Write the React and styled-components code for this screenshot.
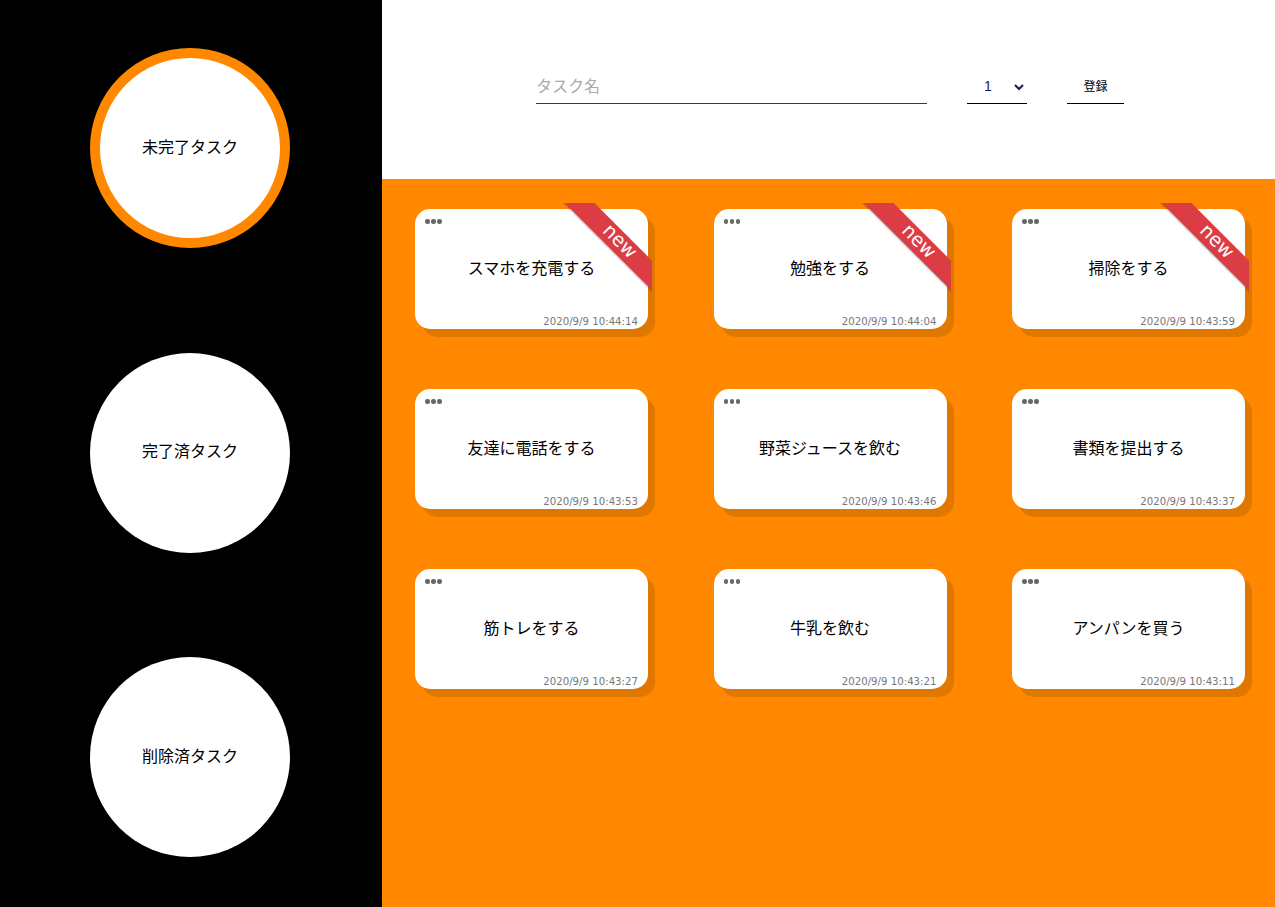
import React from 'react';
import styled, { createGlobalStyle } from 'styled-components';

const tasks = [
  { name: 'スマホを充電する', date: '2020/9/9 10:44:14', isNew: true },
  { name: '勉強をする', date: '2020/9/9 10:44:04', isNew: true },
  { name: '掃除をする', date: '2020/9/9 10:43:59', isNew: true },
  { name: '友達に電話をする', date: '2020/9/9 10:43:53' },
  { name: '野菜ジュースを飲む', date: '2020/9/9 10:43:46' },
  { name: '書類を提出する', date: '2020/9/9 10:43:37' },
  { name: '筋トレをする', date: '2020/9/9 10:43:27' },
  { name: '牛乳を飲む', date: '2020/9/9 10:43:21' },
  { name: 'アンパンを買う', date: '2020/9/9 10:43:11' },
];

const menus = ['未完了タスク', '完了済タスク', '削除済タスク'];

const App = () => (
  <>
    <GlobalStyle />
    <StyledLayout>
      <StyledSidebar>
        {menus.map((label, i) => (
          <StyledCircle key={label} active={i === 0}>
            {label}
          </StyledCircle>
        ))}
      </StyledSidebar>
      <StyledMain>
        <StyledHeader>
          <StyledInput placeholder="タスク名" />
          <StyledSelect defaultValue="1">
            <option value="1">1</option>
            <option value="2">2</option>
            <option value="3">3</option>
          </StyledSelect>
          <StyledButton>登録</StyledButton>
        </StyledHeader>
        <StyledGrid>
          {tasks.map(task => (
            <StyledCard key={task.name}>
              <StyledDots>
                <span />
                <span />
                <span />
              </StyledDots>
              {task.isNew && (
                <StyledRibbonWrap>
                  <StyledRibbon>new</StyledRibbon>
                </StyledRibbonWrap>
              )}
              <StyledTitle>{task.name}</StyledTitle>
              <StyledDate>{task.date}</StyledDate>
            </StyledCard>
          ))}
        </StyledGrid>
      </StyledMain>
    </StyledLayout>
  </>
);

const GlobalStyle = createGlobalStyle`
  body {
    margin: 0;
    font-family: 'Noto Sans CJK JP', 'Noto Sans', sans-serif;
  }
`;

const StyledLayout = styled.div`
  display: flex;
  width: 1275px;
  height: 907px;
  overflow: hidden;
`;

const StyledSidebar = styled.nav`
  width: 382px;
  flex-shrink: 0;
  background: #000;
  display: flex;
  flex-direction: column;
  align-items: flex-start;
  padding: 48px 0 0 90px;
  gap: 104.5px;
  box-sizing: border-box;
`;

const StyledCircle = styled.div`
  width: 200px;
  height: 200px;
  border-radius: 50%;
  background: #fff;
  box-sizing: border-box;
  border: ${({ active }) => (active ? '10px solid #ff8800' : 'none')};
  display: flex;
  align-items: center;
  justify-content: center;
  padding-bottom: 5px;
  font-size: 16px;
  color: #000;
  cursor: pointer;
`;

const StyledMain = styled.main`
  flex: 1;
  display: flex;
  flex-direction: column;
  background: #ff8800;
`;

const StyledHeader = styled.div`
  height: 179px;
  background: #fff;
  display: flex;
  align-items: flex-start;
  padding: 71px 0 0 154px;
  box-sizing: border-box;
`;

const StyledInput = styled.input`
  width: 391px;
  height: 33px;
  border: none;
  border-bottom: 1px solid #2c3e50;
  outline: none;
  font-family: inherit;
  font-size: 16px;
  padding: 0 0 4px;
  margin-right: 40px;
  box-sizing: border-box;
  &::placeholder {
    color: #aaa;
  }
`;

const StyledSelect = styled.select`
  width: 60px;
  height: 33px;
  border: none;
  border-bottom: 1px solid #000;
  background: transparent;
  font-family: 'Liberation Sans', sans-serif;
  font-size: 14px;
  color: #1a1a5e;
  padding: 0 0 3px 13px;
  margin-right: 40px;
  outline: none;
`;

const StyledButton = styled.button`
  width: 57px;
  height: 33px;
  border: none;
  border-bottom: 1px solid #000;
  background: transparent;
  font-family: inherit;
  font-size: 12px;
  color: #000;
  padding: 0 0 4px;
  cursor: pointer;
`;

const StyledGrid = styled.div`
  display: flex;
  flex-wrap: wrap;
  column-gap: 65.5px;
  row-gap: 60px;
  padding: 30px 0 0 33px;
`;

const StyledCard = styled.div`
  position: relative;
  width: 233px;
  height: 120px;
  background: #fff;
  border-radius: 15px;
  box-shadow: 7px 8px 0 #e07800;
  display: flex;
  align-items: center;
  justify-content: center;
  padding-bottom: 4px;
  box-sizing: border-box;
`;

const StyledDots = styled.div`
  position: absolute;
  top: 10px;
  left: 10px;
  display: flex;
  gap: 1.5px;
  span {
    width: 4.5px;
    height: 4.5px;
    border-radius: 50%;
    background: #666;
  }
`;

const StyledRibbonWrap = styled.div`
  position: absolute;
  top: -6px;
  right: -4px;
  width: 90px;
  height: 90px;
  overflow: hidden;
`;

const StyledRibbon = styled.div`
  position: absolute;
  left: -11px;
  top: 25.5px;
  width: 130px;
  height: 21px;
  line-height: 16px;
  transform: rotate(45deg);
  transform-origin: 65px 10.5px;
  background: #dc3d45;
  color: #fff;
  text-align: center;
  font-family: 'DejaVu Sans', sans-serif;
  font-size: 19px;
  box-shadow: 0 1px 2px rgba(0, 0, 0, 0.25);
  padding-left: 8px;
  box-sizing: border-box;
`;

const StyledTitle = styled.div`
  font-size: 16px;
  color: #000;
`;

const StyledDate = styled.div`
  position: absolute;
  right: 10px;
  bottom: 2px;
  font-family: 'DejaVu Sans', sans-serif;
  font-size: 10.2px;
  color: #777;
`;

export default App;
